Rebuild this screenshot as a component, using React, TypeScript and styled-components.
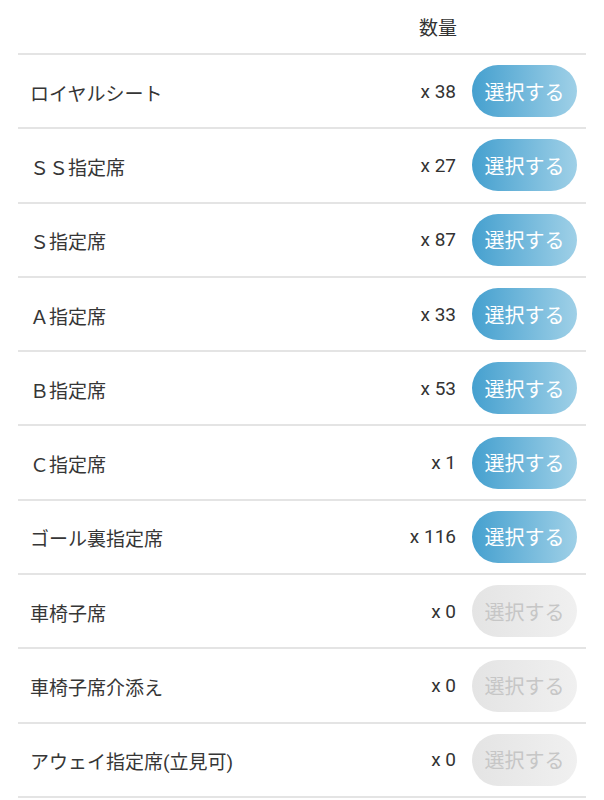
import React from "react";
import styled, { createGlobalStyle } from "styled-components";

const Global = createGlobalStyle`
  html, body { margin: 0; padding: 0; background: #fff; }
  body { font-family: Roboto, "Noto Sans CJK JP", sans-serif; color: #333; }
`;

const Page = styled.div`
  padding: 0 18px 0 18px;
  width: 604px;
  box-sizing: border-box;
`;

const Header = styled.div`
  display: flex;
  justify-content: flex-end;
  align-items: center;
  height: 52.5px;
  padding-top: 0.5px;
  border-bottom: 2px solid #e4e4e4;
  padding-right: 129px;
`;

const HeaderLabel = styled.span`
  font-size: 19px;
  color: #333;
`;

const Row = styled.div`
  display: flex;
  align-items: center;
  height: 72.3px;
  border-bottom: 2px solid #e4e4e4;
  padding: 0 9px 0 12px;
`;

const Name = styled.span`
  flex: 1;
  font-size: 19px;
  color: #363636;
  padding-top: 2px;
`;

const Qty = styled.span`
  font-size: 19px;
  color: #333;
  margin-right: 16px;
`;

const SelectButton = styled.button<{ $disabled?: boolean }>`
  width: 105px;
  height: 52px;
  border: none;
  border-radius: 26px;
  font-family: Roboto, "Noto Sans CJK JP", sans-serif;
  font-size: 20px;
  padding: 0;
  color: ${(p) => (p.$disabled ? "#c6c6c6" : "#fff")};
  background: ${(p) =>
    p.$disabled
      ? "linear-gradient(to right, #e4e4e4, #f0f0f0)"
      : "linear-gradient(to right, #45a0cf, #9fd0e7)"};
`;

const seats: [string, number][] = [
  ["ロイヤルシート", 38],
  ["ＳＳ指定席", 27],
  ["Ｓ指定席", 87],
  ["Ａ指定席", 33],
  ["Ｂ指定席", 53],
  ["Ｃ指定席", 1],
  ["ゴール裏指定席", 116],
  ["車椅子席", 0],
  ["車椅子席介添え", 0],
  ["アウェイ指定席(立見可)", 0],
];

export default function App() {
  return (
    <Page>
      <Global />
      <Header>
        <HeaderLabel>数量</HeaderLabel>
      </Header>
      {seats.map(([name, n]) => (
        <Row key={name}>
          <Name>{name}</Name>
          <Qty>x {n}</Qty>
          <SelectButton $disabled={n === 0}>選択する</SelectButton>
        </Row>
      ))}
    </Page>
  );
}
